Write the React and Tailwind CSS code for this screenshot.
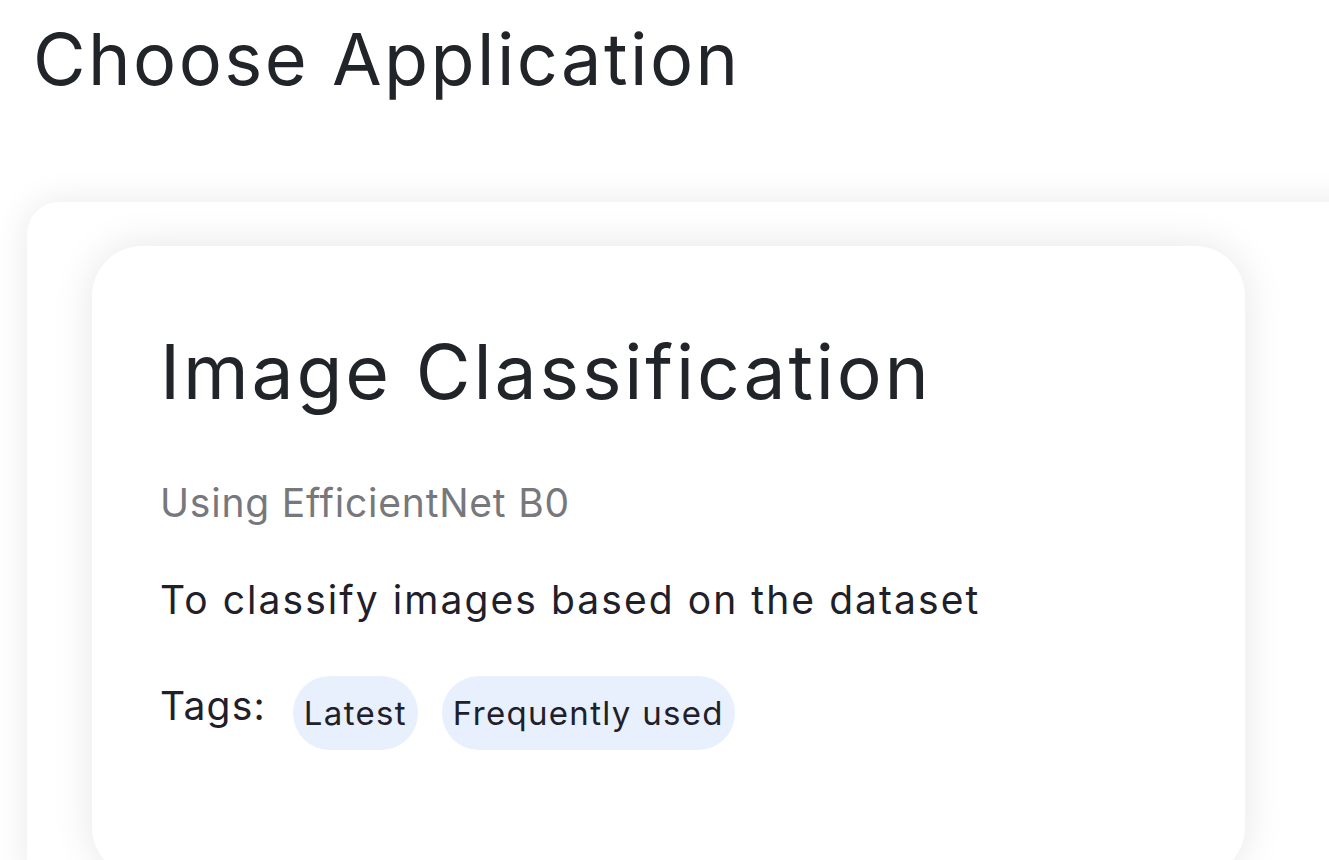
const tags = ['Latest', 'Frequently used']

export default function App() {
  return (
    <div className="min-h-screen overflow-hidden bg-white text-[#212529]" style={{ fontFamily: 'Inter, "Noto Sans", sans-serif' }}>
      <h1 className="pl-[33px] pt-[23px] text-[72px] leading-none font-normal tracking-[0.034em]">
        Choose Application
      </h1>

      {/* panel */}
      <div className="ml-[27px] -mr-[80px] mt-[107px] rounded-tl-[32px] bg-white pl-[65px] pt-[44px] shadow-[0_0_36px_rgba(0,0,0,0.09)]">
        <div className="w-[1153px] rounded-[50px] bg-white pl-[68px] pt-[88px] pb-[127px] shadow-[0_0_42px_rgba(0,0,0,0.1)]">
          <h2 className="text-[75px] leading-none font-normal tracking-[0.038em]">Image Classification</h2>
          <p className="mt-[74px] text-[39px] leading-none tracking-[0.02em] text-[#77787c]">Using EfficientNet B0</p>
          <p className="mt-[58px] text-[39px] leading-none tracking-[0.053em] text-[#1f2029]">
            To classify images based on the dataset
          </p>
          <div className="mt-[57px] flex items-start">
            <span className="mt-[10px] text-[39px] leading-none tracking-[0.03em] text-[#1f2029]">Tags:</span>
            <div className="ml-[27px] flex gap-[24px]">
              {tags.map((t) => (
                <span
                  key={t}
                  className="flex h-[74px] items-center rounded-full bg-[#e7f0fc] px-[11px] text-[33px] leading-none tracking-[0.04em] text-[#1f2029]"
                >
                  {t}
                </span>
              ))}
            </div>
          </div>
        </div>
      </div>
    </div>
  )
}
